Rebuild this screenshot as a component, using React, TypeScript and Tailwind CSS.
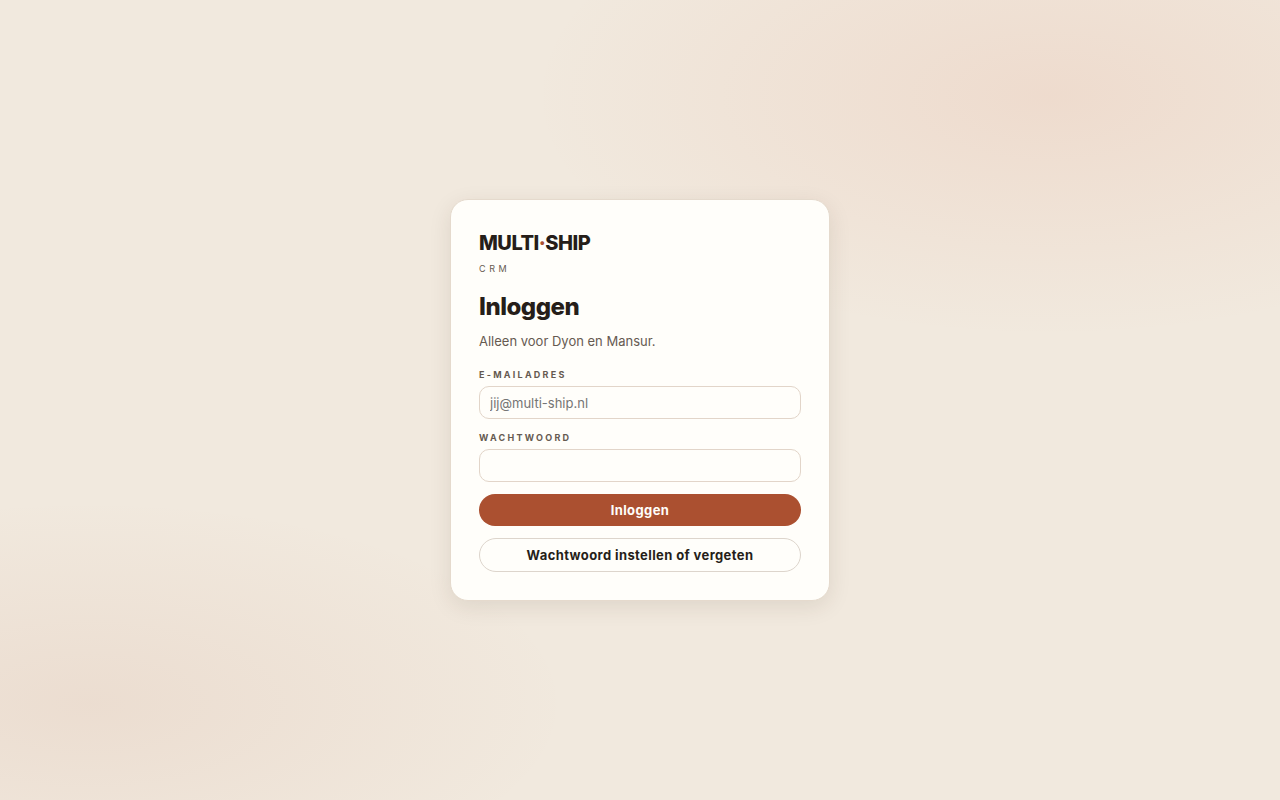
import { useState, type FormEvent } from "react";

const fieldClass =
  "h-[33px] w-full rounded-[10px] border border-[#e2d5c9] bg-[#fffefa] px-2.5 text-[13px] text-[#261e19] outline-none placeholder:text-[#757575] focus:border-[#ab5030]";
const labelClass =
  "mb-1 block text-[9px] leading-[14px] font-bold tracking-[0.25em] text-[#665a51] uppercase";

export default function App() {
  const [email, setEmail] = useState("");
  const [password, setPassword] = useState("");

  const handleSubmit = (e: FormEvent) => {
    e.preventDefault();
  };

  return (
    <main className="flex min-h-screen items-center justify-center bg-[#f1e9de] bg-[radial-gradient(860px_400px_at_82%_12%,rgba(217,119,87,0.12),transparent_60%),radial-gradient(800px_340px_at_7%_88%,rgba(171,80,48,0.08),transparent_60%)] font-[Inter,sans-serif] text-[#261e19]">
      <section className="w-full max-w-[380px] rounded-[18px] border border-[#e5dacd] bg-[#fffefa] p-7 shadow-[0_6px_22px_rgba(60,35,15,0.1)]">
        {/* Brand */}
        <div className="text-xl leading-[30px] font-extrabold tracking-tight">
          MULTI<span className="text-[#ab5030]">·</span>SHIP
        </div>
        <div className="mt-1 text-[9px] leading-[14px] tracking-[0.4em] text-[#665a51]">CRM</div>

        <h1 className="mt-[15px] text-2xl leading-8 font-extrabold tracking-[-0.02em]">Inloggen</h1>
        <p className="mt-2 text-[13px] leading-5 text-[#665a51]">
          Alleen voor Dyon en Mansur.
        </p>

        <form onSubmit={handleSubmit} className="mt-[17px] flex flex-col gap-3">
          <div>
            <label htmlFor="email" className={labelClass}>E-mailadres</label>
            <input
              id="email"
              type="email"
              autoComplete="email"
              placeholder="jij@multi-ship.nl"
              value={email}
              onChange={(e) => setEmail(e.target.value)}
              className={fieldClass}
            />
          </div>
          <div>
            <label htmlFor="password" className={labelClass}>Wachtwoord</label>
            <input
              id="password"
              type="password"
              autoComplete="current-password"
              value={password}
              onChange={(e) => setPassword(e.target.value)}
              className={fieldClass}
            />
          </div>
          <button
            type="submit"
            className="h-8 cursor-pointer rounded-full bg-[#ab5030] pt-0.5 text-[13px] font-bold tracking-[0.03em] text-[#fffefa] hover:bg-[#964427]"
          >
            Inloggen
          </button>
          <button
            type="button"
            className="h-[34px] cursor-pointer rounded-full border border-[#ddd5cc] pt-0.5 text-[13px] font-bold tracking-[0.03em] hover:bg-[#f8f2ea]"
          >
            Wachtwoord instellen of vergeten
          </button>
        </form>
      </section>
    </main>
  );
}
